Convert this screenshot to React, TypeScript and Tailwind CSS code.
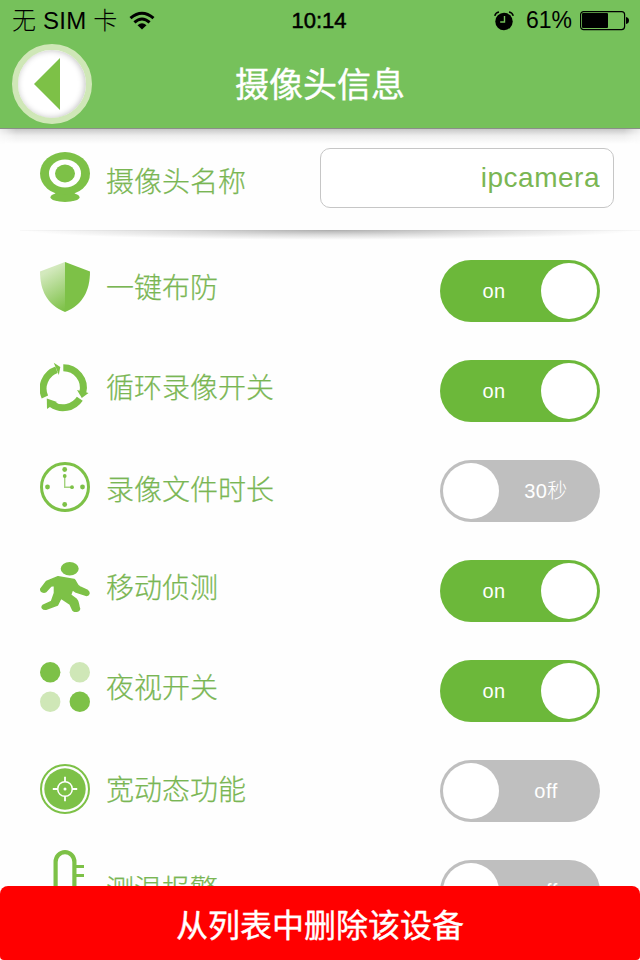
import type { ReactNode } from 'react';

// ── Icons ─────────────────────────────────────────────────────────────────────

function WebcamIcon() {
  return (
    <svg width="50" height="50" viewBox="0 0 50 50" className="block text-[#7dc147]" aria-hidden="true">
      <ellipse cx="25" cy="45.200" rx="14.500" ry="4.800" fill="currentColor" />
      <path d="M13 36h24l-3 7h-18z" fill="currentColor" />
      <ellipse cx="25" cy="21.500" rx="25" ry="21.500" fill="currentColor" />
      <ellipse cx="25" cy="21.500" rx="16" ry="14" fill="white" />
      <ellipse cx="25" cy="21.500" rx="10" ry="9" fill="currentColor" />
    </svg>
  );
}

function ShieldIcon() {
  return (
    <svg width="50" height="50" viewBox="0 0 50 50" className="block" aria-hidden="true">
      <defs>
        <linearGradient id="shield-left" gradientUnits="userSpaceOnUse" x1="4" y1="6" x2="28" y2="46">
          <stop offset="0.1" stopColor="#d3e9bd" />
          <stop offset="1" stopColor="#7dc147" />
        </linearGradient>
      </defs>
      <path d="M25 0 0 9.500C0 28 7 43 25 50z" fill="url(#shield-left)" />
      <path d="M25 0 50 9.500C50 28 43 43 25 50z" fill="#7dc147" />
    </svg>
  );
}

function LoopIcon() {
  return (
    <svg width="50" height="50" viewBox="0 0 50 50" className="block text-[#7dc147]" aria-hidden="true">
      <g fill="none" stroke="currentColor" strokeWidth="7">
        <path d="M23.300 5.800A20 20 0 0 1 42.800 30.500" />
        <path d="M39.800 36.800A20 20 0 0 1 11.500 42" />
        <path d="M4.900 35A20 20 0 0 1 16.500 7.800" />
      </g>
      <g fill="currentColor">
        <path d="M37 28 48.500 31 41.800 36z" />
        <path d="M7 47 6.800 36.500 17 40z" />
        <path d="M13.800 0.800 20.300 5 18.800 13z" />
      </g>
    </svg>
  );
}

function ClockIcon() {
  return (
    <svg width="50" height="50" viewBox="0 0 50 50" className="block text-[#7dc147]" aria-hidden="true">
      <circle cx="25" cy="25" r="23.500" fill="none" stroke="currentColor" strokeWidth="3" />
      <g fill="currentColor">
        <circle cx="24.700" cy="7.500" r="2.400" />
        <circle cx="7.500" cy="25" r="2.400" />
        <circle cx="42.500" cy="25" r="2.400" />
        <circle cx="24.700" cy="42.500" r="2.400" />
        <circle cx="24.700" cy="14" r="1.900" />
        <circle cx="32" cy="25.200" r="1.900" />
      </g>
      <path d="M24.700 14V25.200H32" fill="none" stroke="currentColor" strokeWidth="1.400" opacity="0.7" />
    </svg>
  );
}

function WalkerIcon() {
  return (
    <svg width="50" height="50" viewBox="0 0 50 50" className="block text-[#7dc147]" aria-hidden="true">
      <ellipse cx="29.700" cy="6.700" rx="9" ry="6.700" fill="currentColor" />
      <path
        d="M18 14.800 34 17.500C36.500 19 36 23 40 25L47.500 28.500C50 30.500 49 33.800 46 33.300L36 30 32.500 27.500 30.500 33 36.500 37.500C39 40 38 43 39.500 46.500C39.500 49.500 34.500 50 33 48.300L30 42 21 36 17.500 43 6 47.300C2.500 47.500 1 45 3.300 43.200L11.500 39.500 14.500 31 14.500 23.500 11 24 6 29.500C3.500 31 0.500 29.500 0.800 27L6.500 19.500z"
        fill="currentColor"
        stroke="currentColor"
        strokeWidth="1.600"
        strokeLinejoin="round"
      />
    </svg>
  );
}

function NightDotsIcon() {
  return (
    <svg width="50" height="50" viewBox="0 0 50 50" className="block" aria-hidden="true">
      <circle cx="10.200" cy="10.200" r="10.200" fill="#7dc147" />
      <circle cx="39.800" cy="10.200" r="10.200" fill="#cfe7b7" />
      <circle cx="10.200" cy="39.800" r="10.200" fill="#cfe7b7" />
      <circle cx="39.800" cy="39.800" r="10.200" fill="#7dc147" />
    </svg>
  );
}

function TargetIcon() {
  return (
    <svg width="50" height="50" viewBox="0 0 50 50" className="block text-[#7dc147]" aria-hidden="true">
      <circle cx="25" cy="25" r="24" fill="none" stroke="currentColor" strokeWidth="2" />
      <circle cx="25" cy="25" r="20.700" fill="currentColor" />
      <g fill="none" stroke="white" strokeWidth="1.500">
        <circle cx="25" cy="25" r="7.300" />
        <path d="M25 12.800v5M25 32.200v5M12.800 25h5M32.200 25h5" strokeWidth="1.800" />
      </g>
      <circle cx="25" cy="25" r="1.500" fill="white" />
    </svg>
  );
}

function ThermometerIcon() {
  return (
    <svg width="50" height="50" viewBox="0 0 50 50" className="block text-[#7dc147]" aria-hidden="true">
      <g fill="none" stroke="currentColor" strokeWidth="4.200">
        <path d="M15.600 50V12a9.400 9.900 0 0 1 18.800 0V50" />
        <path d="M34 16.500h10M34 25.500h10" strokeWidth="3.200" />
      </g>
    </svg>
  );
}

function WifiIcon() {
  return (
    <svg width="26" height="20" viewBox="0 0 26 20" aria-hidden="true">
      <g fill="none" stroke="black" strokeWidth="3">
        <path d="M1.500 7.200Q13-2.800 24.500 7.200" />
        <path d="M5.400 11.300Q13 4.600 20.600 11.300" />
      </g>
      <path d="M8.500 14.200Q13 10.200 17.500 14.200L13 18.500z" fill="black" />
    </svg>
  );
}

function AlarmIcon() {
  return (
    <svg width="20" height="20" viewBox="0 0 20 20" aria-hidden="true">
      <circle cx="10" cy="10.500" r="8.700" fill="black" />
      <path d="M10.500 5v6H6.200" fill="none" stroke="#76c15b" strokeWidth="1.400" />
      <path d="M.8 4.800Q1.500 1.500 5 .9M19.200 4.800Q18.500 1.500 15 .9" fill="none" stroke="black" strokeWidth="1.500" />
    </svg>
  );
}

function BatteryIcon() {
  return (
    <svg width="50" height="20" viewBox="0 0 50 20" aria-hidden="true">
      <rect x="0.600" y="0.600" width="44" height="18" rx="3" fill="none" stroke="black" strokeWidth="1.200" />
      <rect x="2" y="2.100" width="26" height="15" rx="1" fill="black" />
      <path d="M46 6q3 .5 3 3.500t-3 3.500z" fill="black" />
    </svg>
  );
}

// ── Toggle ────────────────────────────────────────────────────────────────────

interface ToggleProps {
  on: boolean;
  text: string;
}

function Toggle({ on, text }: ToggleProps) {
  return (
    <button
      type="button"
      role="switch"
      aria-checked={on}
      className={`flex h-[62px] w-[160px] items-center rounded-full px-[3px] ${
        on ? 'bg-[#6cb83a]' : 'flex-row-reverse bg-[#bfbfbf]'
      }`}
    >
      <span
        className={`flex-1 text-center text-[20px] font-light tracking-[0.5px] text-white ${on ? 'pl-1' : 'pr-1'}`}
      >
        {text}
      </span>
      <span className="h-14 w-14 rounded-full bg-white" />
    </button>
  );
}

// ── Rows ──────────────────────────────────────────────────────────────────────

interface Setting {
  label: string;
  icon: ReactNode;
  on: boolean;
  text: string;
  iconClass: string;
  labelClass: string;
}

const settings: Setting[] = [
  { label: '一键布防', icon: <ShieldIcon />, on: true, text: 'on', iconClass: 'pt-0.5', labelClass: 'pt-[3px]' },
  { label: '循环录像开关', icon: <LoopIcon />, on: true, text: 'on', iconClass: 'pt-0.5', labelClass: 'pt-[3px]' },
  { label: '录像文件时长', icon: <ClockIcon />, on: false, text: '30秒', iconClass: 'pt-0.5', labelClass: 'pt-[5px]' },
  { label: '移动侦测', icon: <WalkerIcon />, on: true, text: 'on', iconClass: 'pt-0.5', labelClass: 'pt-[3px]' },
  { label: '夜视开关', icon: <NightDotsIcon />, on: true, text: 'on', iconClass: 'pt-0.5', labelClass: 'pt-[3px]' },
  { label: '宽动态功能', icon: <TargetIcon />, on: false, text: 'off', iconClass: 'pt-1', labelClass: 'pt-[5px]' },
  { label: '测温报警', icon: <ThermometerIcon />, on: false, text: 'off', iconClass: '-mt-2.5', labelClass: 'pt-[5px]' },
];

function SettingRow({ setting }: { setting: Setting }) {
  return (
    <li className="flex h-[100px] shrink-0 items-start px-10">
      <div className={setting.iconClass}>{setting.icon}</div>
      <span
        className={`ml-4 flex-1 text-[28px] leading-[52px] font-light text-[#7ab653] [-webkit-text-stroke:0.25px_#7ab653] ${setting.labelClass}`}
      >
        {setting.label}
      </span>
      <Toggle on={setting.on} text={setting.text} />
    </li>
  );
}

// ── Page ──────────────────────────────────────────────────────────────────────

function StatusBar() {
  return (
    <div className="grid h-10 grid-cols-3 items-center pt-px pr-2.5 pl-3 text-[23px] text-black">
      <div className="flex items-center gap-3">
        <span className="text-[24px] leading-8 font-light tracking-[0.2px] whitespace-nowrap">无 SIM 卡</span>
        <WifiIcon />
      </div>
      <span className="pr-1 text-center text-[22px] [-webkit-text-stroke:0.5px_black]">10:14</span>
      <div className="flex items-center justify-end">
        <AlarmIcon />
        <span className="mr-2 ml-3">61%</span>
        <BatteryIcon />
      </div>
    </div>
  );
}

export default function App() {
  return (
    <div className="flex h-[960px] w-[640px] flex-col overflow-hidden bg-[#fefefe] font-['Liberation_Sans','Noto_Sans_CJK_SC',sans-serif]">
      <header className="h-[129px] shrink-0 border-b border-[#8a8f88] bg-[#76c15b]">
        <StatusBar />
        <div className="grid grid-cols-[80px_1fr_80px] items-center px-3 pt-1">
          <button
            type="button"
            aria-label="返回"
            className="flex h-20 w-20 items-center justify-center rounded-full border-[6px] border-[#cfe7b7] bg-white shadow-[inset_-1px_0_6px_rgba(0,0,0,0.25)]"
          >
            <svg width="26" height="52" viewBox="0 0 26 52" className="mr-2.5" aria-hidden="true">
              <path d="M26 0v52L0 26z" fill="#7dc147" />
            </svg>
          </button>
          <h1 className="pt-px text-center text-[34px] leading-[50px] font-normal text-white [-webkit-text-stroke:0.4px_white]">
            摄像头信息
          </h1>
        </div>
      </header>
      <div className="h-[15px] shrink-0 bg-linear-to-b from-[#c8c8c8] via-[#eeeeee] via-45% to-[#fefefe] [mask-image:linear-gradient(to_right,rgba(0,0,0,0.3),black_16px,black_624px,rgba(0,0,0,0.3))]" />

      <section className="flex h-[86px] shrink-0 items-start pt-1 pr-[26px] pl-10">
        <div className="pt-1">
          <WebcamIcon />
        </div>
        <span className="ml-4 flex-1 pt-1 text-[28px] leading-[62px] font-light text-[#7ab653] [-webkit-text-stroke:0.25px_#7ab653]">
          摄像头名称
        </span>
        <input
          type="text"
          defaultValue="ipcamera"
          aria-label="摄像头名称"
          className="h-[60px] w-[294px] rounded-[10px] border border-[#c6c6c6] bg-white pr-[13px] text-right text-[28px] tracking-[0.5px] text-[#7ab653] outline-none"
        />
      </section>
      <div className="ml-5 h-2.5 shrink-0 bg-[radial-gradient(ellipse_at_top,#b0b0b0_0%,#dcdcdc_35%,#fefefe_70%)]">
        <div className="h-px bg-linear-to-r from-[#f8f8f8] via-[#b0b0b0] to-[#f8f8f8]" />
      </div>

      <ul className="flex min-h-0 flex-1 flex-col overflow-hidden pt-5">
        {settings.map((s) => (
          <SettingRow key={s.label} setting={s} />
        ))}
      </ul>

      <button
        type="button"
        className="relative -mt-2 h-[74px] shrink-0 rounded-t-lg rounded-b-[4px] bg-[#ff0000] pt-1.5 text-[32px] font-normal text-white [-webkit-text-stroke:0.4px_white]"
      >
        从列表中删除该设备
      </button>
    </div>
  );
}
